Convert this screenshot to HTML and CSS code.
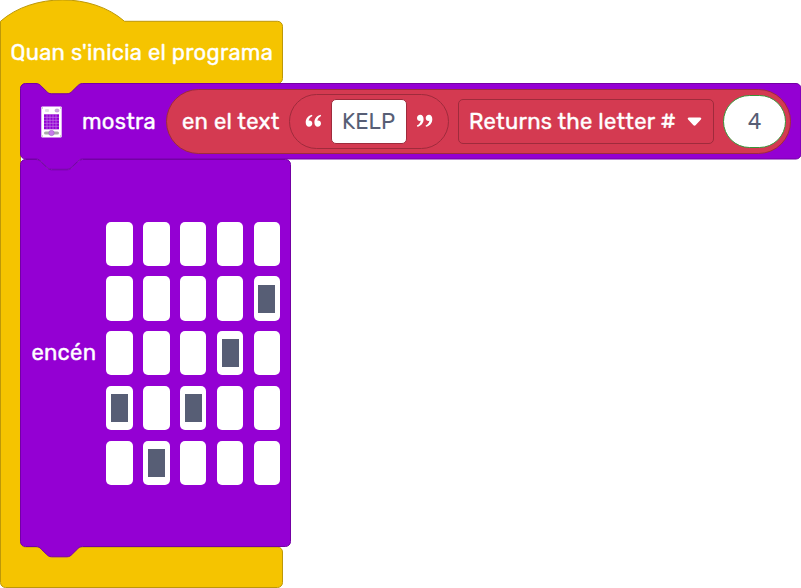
FILE: index.html
```html
<!DOCTYPE html>
<html lang="ca">
<head>
<meta charset="utf-8">
<title>Programa</title>
<link rel="stylesheet" href="styles.css">
</head>
<body>
<main class="program">
  <svg class="shape" width="284" height="588" viewBox="0 0 284 588">
    <path class="event" d="M.5 21.3C32.800-7.200 92.200-7.200 124.500 21.300H277.500a5 5 0 0 1 5 5V78.500a5 5 0 0 1-5 5H82.600L72 94H48L37 83.500H25.500a5 5 0 0 0-5 5V542a5 5 0 0 0 5 5H277.500a5 5 0 0 1 5 5V582.500a5 5 0 0 1-5 5H5.500a5 5 0 0 1-5-5Z"/>
  </svg>
  <header class="head"><span class="label w-head">Quan s'inicia el programa</span></header>
  <div class="stack">
    <section class="block show">
      <svg class="shape" width="782" height="88" viewBox="0 0 782 88">
        <path class="action" d="M.5 5.500a5 5 0 0 1 5-5H16c2.600 0 3.900 1.300 5.200 2.600l5.200 5.100c1.300 1.300 2.600 2.600 5.200 2.600H47c2.600 0 3.900-1.300 5.200-2.600l5.200-5.100c1.300-1.300 2.600-2.600 5.200-2.600H776a5 5 0 0 1 5 5V71a5 5 0 0 1-5 5H62.600c-2.600 0-3.900 1.300-5.200 2.600l-5.200 5.100c-1.300 1.300-2.600 2.600-5.200 2.600H31.600c-2.600 0-3.900-1.300-5.200-2.600l-5.200-5.100C19.900 77.300 18.600 76 16 76H5.500a5 5 0 0 1-5-5Z"/>
      </svg>
      <svg class="device" width="21" height="32" viewBox="0 0 21 32">
        <rect x=".3" y=".5" width="20.400" height="31" rx="1" fill="#fff"/>
        <rect x="3" y="8.300" width="15" height="15" fill="#9400d3"/>
        <path d="M6 8.300v15M9 8.300v15M12 8.300v15M15 8.300v15M3 11.300h15M3 14.300h15M3 17.300h15M3 20.300h15" stroke="#c88be8" stroke-width=".6"/>
        <rect x="4" y="3" width="4" height="3" rx="1" fill="#e3dfe6"/>
        <rect x="14" y="3" width="4" height="3" rx="1.500" fill="#d0a4e8" stroke="#a88bb8" stroke-width=".5"/>
        <rect x="3" y="25.500" width="15" height="3" rx="1.500" fill="#aaa"/>
        <circle cx="10.500" cy="27" r="2.700" fill="#c77bea" stroke="#9a5bc0" stroke-width=".5"/>
        <path d="M1 2h1M19 2h1M1 30h1M19 30h1" stroke="#aaa"/>
      </svg>
      <span class="label w-show">mostra</span>
      <div class="reporter">
        <span class="label w-in">en el text</span>
        <div class="string">
          <svg class="quote" width="17" height="15" viewBox="0 0 17 15"><path d="M7 .7C3.200 1.500.7 4.600.7 8.300c0 2.800 1.300 4.500 3.300 4.500 1.900 0 3.300-1.300 3.300-3.200 0-1.800-1.200-3-2.900-3-.3 0-.6 0-.8.100.300-1.900 1.600-3.800 3.800-4.800ZM15.700.7c-3.800.8-6.300 3.900-6.300 7.600 0 2.800 1.300 4.500 3.300 4.500 1.900 0 3.300-1.300 3.300-3.200 0-1.800-1.200-3-2.900-3-.3 0-.6 0-.8.100.3-1.900 1.600-3.800 3.800-4.800Z"/></svg>
          <span class="field"><span class="value">KELP</span></span>
          <svg class="quote" width="17" height="15" viewBox="0 0 17 15"><path transform="rotate(180 8.500 6.750)" d="M7 .7C3.200 1.500.7 4.600.7 8.300c0 2.800 1.300 4.500 3.300 4.500 1.900 0 3.300-1.300 3.300-3.200 0-1.800-1.200-3-2.900-3-.3 0-.6 0-.8.100.300-1.900 1.600-3.800 3.800-4.800ZM15.700.7c-3.800.8-6.300 3.900-6.300 7.600 0 2.800 1.300 4.500 3.300 4.500 1.900 0 3.300-1.300 3.300-3.200 0-1.800-1.200-3-2.900-3-.3 0-.6 0-.8.100.3-1.900 1.600-3.800 3.800-4.800Z"/></svg>
        </div>
        <div class="dropdown">
          <span class="label w-drop">Returns the letter #</span>
          <svg width="15" height="10" viewBox="0 0 15 10"><path d="M2 .5h11c1.300 0 1.700 1.200.9 2L8.800 8.100c-.8.800-1.800.8-2.600 0L1.100 2.500C.3 1.700.7.500 2 .5Z" fill="#fff"/></svg>
        </div>
        <div class="number"><span class="value">4</span></div>
      </div>
    </section>
    <section class="block leds">
      <svg class="shape" width="272" height="400" viewBox="0 0 272 400">
        <path class="action" d="M.5 5.500a5 5 0 0 1 5-5H16c2.600 0 3.900 1.300 5.200 2.600l5.200 5.100c1.300 1.300 2.600 2.600 5.200 2.600H47c2.600 0 3.900-1.300 5.200-2.600l5.200-5.100c1.300-1.300 2.600-2.600 5.200-2.600H265.500a5 5 0 0 1 5 5V382.500a5 5 0 0 1-5 5H62.600c-2.600 0-3.900 1.300-5.200 2.600l-5.200 5.100c-1.300 1.300-2.600 2.600-5.200 2.600H31.600c-2.600 0-3.900-1.300-5.200-2.600l-5.200-5.100C19.900 388.800 18.600 387.500 16 387.500H5.500a5 5 0 0 1-5-5Z"/>
      </svg>
      <span class="label w-led">encén</span>
      <div class="matrix">
        <i></i><i></i><i></i><i></i><i></i>
        <i></i><i></i><i></i><i></i><i class="on"></i>
        <i></i><i></i><i></i><i class="on"></i><i></i>
        <i class="on"></i><i></i><i class="on"></i><i></i><i></i>
        <i></i><i class="on"></i><i></i><i></i><i></i>
      </div>
    </section>
  </div>
</main>
</body>
</html>
```

FILE: styles.css
```css
* { box-sizing: border-box; }
body {
  margin: 0;
  background: #fff;
  overflow: hidden;
  font: 400 22px/28px Rubik, Roboto, sans-serif;
  color: #fff;
}
.program { position: relative; width: 801px; height: 588px; }
.shape { position: absolute; left: 0; top: 0; z-index: -1; overflow: visible; }
.event { fill: #f5c400; stroke: #bd9808; }
.action { fill: #9400d3; stroke: #7300a4; }
.label, .value { display: block; white-space: nowrap; flex: none; }
.label { letter-spacing: .28px; -webkit-text-stroke: .4px #fff; }
.value { color: #575e75; }
.head { height: 83px; padding: 39px 0 0 10.5px; }
.stack { padding-left: 20px; }
.block { position: relative; z-index: 1; display: flex; align-items: center; }
.show { width: 781px; height: 76px; padding: 1px 10px 0 21px; }
.device { margin-right: 20px; flex: none; }
.w-head { width: 262px; }
.w-show { width: 84px; }
.reporter {
  flex: 1;
  height: 65px;
  border: 1px solid #9f2b3c;
  border-radius: 33px;
  background: #d43a51;
  display: flex;
  align-items: center;
  padding-left: 15px;
}
.w-in { width: 107px; }
.string {
  width: 160px;
  height: 55px;
  border: 1px solid #9f2b3c;
  border-radius: 28px;
  display: flex;
  align-items: center;
  justify-content: space-between;
  padding: 0 15px 0 15px;
  flex: none;
}
.quote { fill: #fff; }
.field {
  width: 76px;
  height: 45px;
  border: 1px solid #9f2b3c;
  border-radius: 5px;
  background: #fff;
  padding: 8px 0 0 10px;
}
.dropdown {
  width: 256px;
  height: 45px;
  margin: 0 9px 0 9px;
  border: 1px solid #9f2b3c;
  border-radius: 5px;
  display: flex;
  align-items: center;
  padding-left: 10px;
  flex: none;
}
.w-drop { width: 218px; }
.number {
  width: 63px;
  height: 53px;
  border: 1px solid #389438;
  border-radius: 27px;
  background: #fff;
  display: flex;
  align-items: center;
  justify-content: center;
  flex: none;
}
.leds { width: 271px; height: 388px; padding: .6px 0 0 11.4px; }
.w-led { width: 75px; padding-bottom: 1.6px; }
.matrix {
  display: grid;
  grid-template-columns: repeat(5, 26.5px);
  grid-auto-rows: 44.3px;
  gap: 10.4px 10.3px;
}
.matrix i {
  border-radius: 5px;
  background: #fff;
  display: grid;
  place-items: center;
}
.on::before { content: ""; width: 17px; height: 28px; background: #575e75; }
```
